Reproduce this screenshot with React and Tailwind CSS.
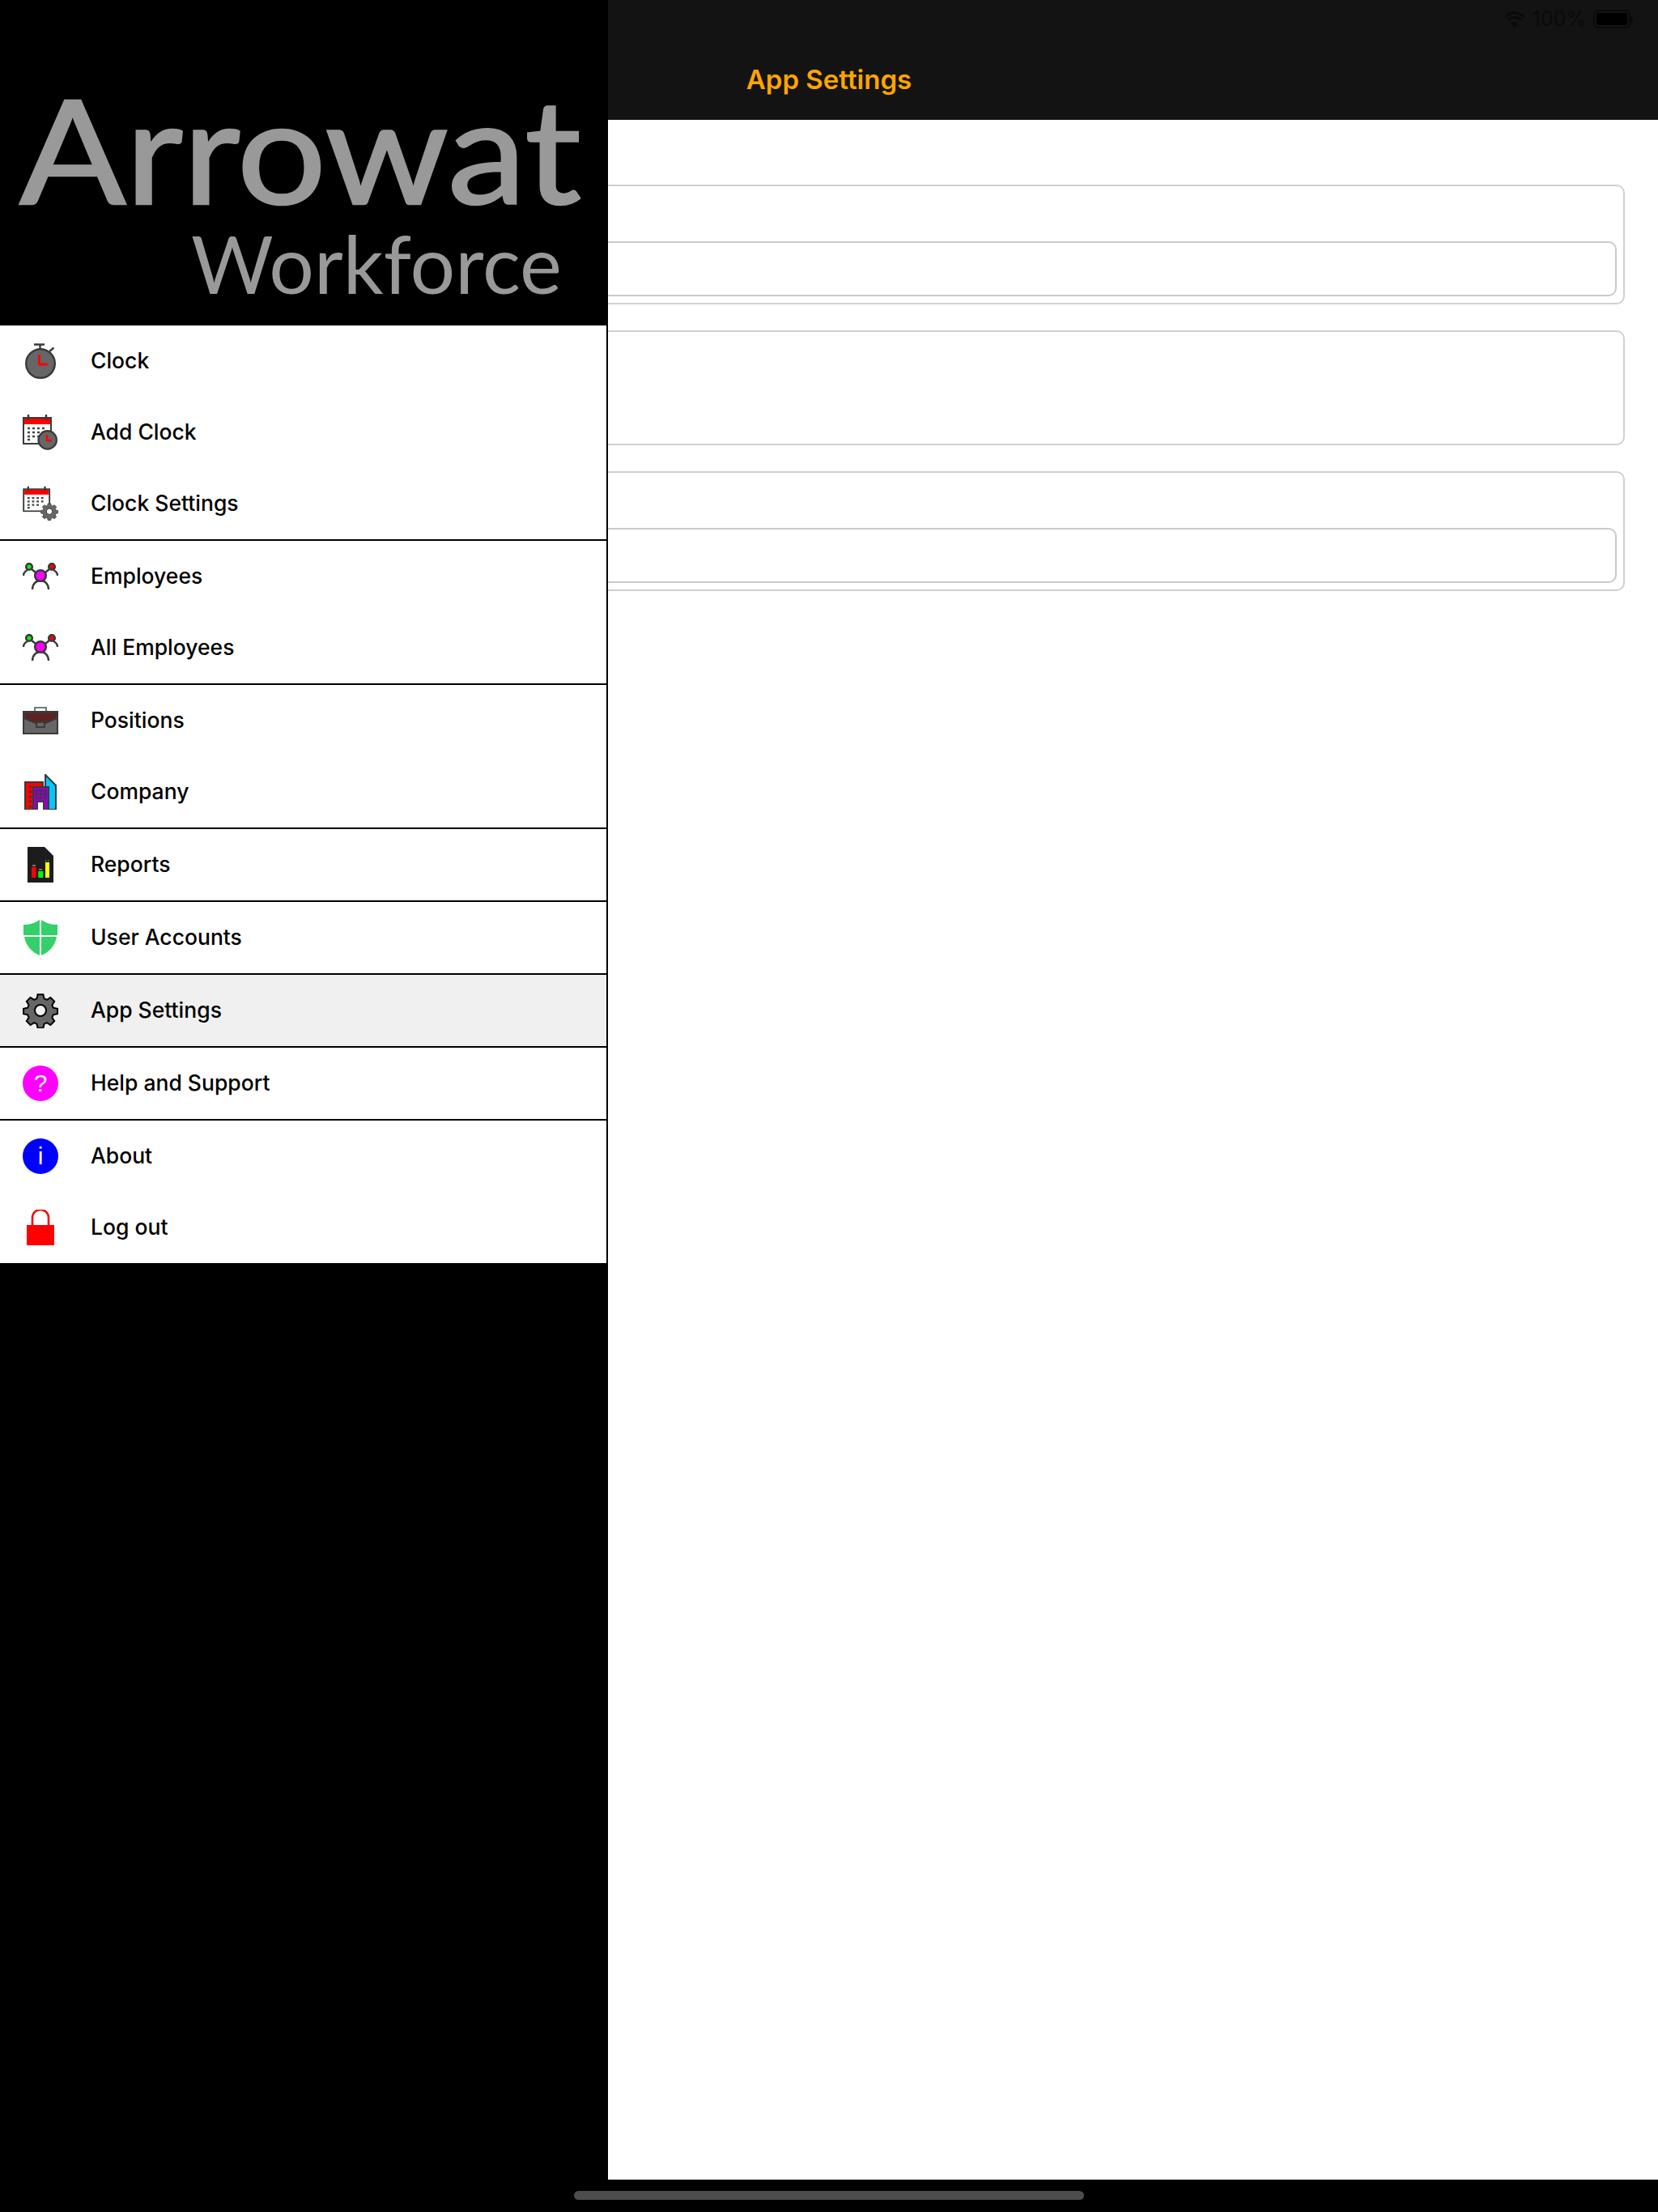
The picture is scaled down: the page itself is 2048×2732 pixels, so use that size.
import { Fragment } from 'react';

const ink = '#3a3a3a';

const ClockIcon = () => (
  <svg width="44" height="44" viewBox="0 0 44 44">
    <path d="M14 1.500h13M21.500 2v5M33 10l5.500-4.500" stroke={ink} strokeWidth="2.400" fill="none" />
    <circle cx="22" cy="25" r="17.800" fill="#666" stroke={ink} strokeWidth="2.400" />
    <path d="M20.500 14v12h10" stroke="#f00" strokeWidth="2.800" fill="none" />
  </svg>
);

const Calendar = () => (
  <g>
    <rect x="2" y="4" width="34" height="32" fill="#fff" stroke={ink} strokeWidth="2" />
    <rect x="3" y="5" width="32" height="7" fill="#f00" />
    <path d="M8 0v7M30 0v7" stroke={ink} strokeWidth="2.400" />
    <path d="M7 17h3M13 17h3M19 17h3M25 17h3M7 22h3M13 22h3M19 22h3M25 22h3M7 27h3M13 27h3M19 27h3M7 31h3" stroke="#444" strokeWidth="2.600" />
  </g>
);

const AddClockIcon = () => (
  <svg width="44" height="44" viewBox="0 0 44 44">
    <g transform="translate(-1 0)">
      <Calendar />
    </g>
    <circle cx="30.700" cy="31.400" r="11.200" fill="#666" stroke={ink} strokeWidth="2.200" />
    <path d="M30 25v7h6" stroke="#f00" strokeWidth="2.400" fill="none" />
  </svg>
);

const gearPath =
  'M18.600 2.200h6.800l1.200 5.200 3.300 1.400 4.500-2.800 4.800 4.800-2.800 4.500 1.400 3.300 5.200 1.200v6.400l-5.200 1.200-1.400 3.300 2.800 4.500-4.800 4.800-4.500-2.800-3.300 1.400-1.200 5.200h-6.800l-1.200-5.200-3.300-1.400-4.500 2.800-4.800-4.800 2.800-4.500-1.400-3.300-5.200-1.200v-6.400l5.200-1.200 1.400-3.300-2.800-4.500 4.800-4.800 4.500 2.800 3.300-1.400z';

const ClockSettingsIcon = () => (
  <svg width="44" height="44" viewBox="0 0 44 44">
    <g transform="translate(-0.700 0.700) scale(0.94 0.85)">
      <Calendar />
    </g>
    <g transform="translate(22 20.700) scale(0.5)">
      <path d={gearPath} fill="#666" stroke="#555" strokeWidth="2" />
      <circle cx="22" cy="22" r="7.500" fill="#fff" stroke="#333" strokeWidth="2" />
    </g>
  </svg>
);

const EmployeesIcon = () => (
  <svg width="44" height="34" viewBox="0 0 44 34">
    <path d="M1 16c0-4 3-6 5-7M43 16c0-4-3-6-5-7M12 33c0-7 5-11 10-11s10 4 10 11" stroke={ink} strokeWidth="2.400" fill="none" />
    <path d="M11 8l5 4M33 8l-5 4" stroke={ink} strokeWidth="2.400" />
    <circle cx="8" cy="5" r="3.800" fill="#0f0" stroke={ink} strokeWidth="2.600" />
    <circle cx="36" cy="5" r="3.800" fill="#f00" stroke={ink} strokeWidth="2.600" />
    <circle cx="22" cy="16" r="6.800" fill="#f0f" stroke={ink} strokeWidth="2.600" />
  </svg>
);

const PositionsIcon = () => (
  <svg width="44" height="34" viewBox="0 0 44 34">
    <path d="M15 6V1h14v5" stroke="#777" strokeWidth="2" fill="none" />
    <rect x="1" y="6" width="42" height="27" fill="#666" stroke={ink} strokeWidth="2" />
    <path d="M2 7h40v7l-20 9-20-9z" fill="#5e2222" stroke={ink} strokeWidth="2" />
    <rect x="17" y="19" width="10" height="6" fill="#666" stroke={ink} strokeWidth="2" />
  </svg>
);

const CompanyIcon = () => (
  <svg width="40" height="44" viewBox="0 0 40 44">
    <path d="M26 1l13 13v30H26z" fill="#00c8ff" stroke={ink} strokeWidth="2" />
    <rect x="1" y="10" width="22" height="34" fill="#f00" stroke={ink} strokeWidth="2" />
    <path d="M6 16h3M6 22h3M6 28h3M6 34h3M6 40h3" stroke={ink} strokeWidth="3" />
    <rect x="11" y="16" width="19" height="28" fill="#9400c8" stroke={ink} strokeWidth="2" />
    <path d="M15 20h11v10H15z M20.500 20v10M15 25h11" fill="none" stroke={ink} strokeWidth="1.600" />
    <path d="M16 44v-10h8v10" fill="#fff" stroke={ink} strokeWidth="2" />
  </svg>
);

const ReportsIcon = () => (
  <svg width="32" height="44" viewBox="0 0 32 44">
    <path d="M0 0h21l11 11v33H0z" fill="#1c1c1c" />
    <rect x="5" y="25" width="5.500" height="13" fill="#f00" />
    <rect x="13.300" y="30" width="6" height="8" fill="#0f0" />
    <rect x="22" y="19" width="5" height="19" fill="#ff0" />
    <path d="M6 23h4M14 28h4M22 17h1M25 17h1" stroke="#ccc" strokeWidth="1" />
  </svg>
);

const ShieldIcon = () => (
  <svg width="42" height="44" viewBox="0 0 42 44">
    <path d="M0 6c8 0 14-2 20-6v19H0z" fill="#34d06a" />
    <path d="M42 6c-8 0-14-2-20-6v19h20z" fill="#34d06a" />
    <path d="M1 21h19v23C10 40 3 32 1 21z" fill="#34d06a" />
    <path d="M41 21H22v23c10-4 17-12 19-23z" fill="#34d06a" />
  </svg>
);

const GearIcon = () => (
  <svg width="44" height="44" viewBox="0 0 44 44">
    <path d={gearPath} fill="#666" stroke="#000" strokeWidth="2" />
    <circle cx="22" cy="22" r="7" fill="#f0f0f0" stroke="#000" strokeWidth="2" />
  </svg>
);

const RoundIcon = ({ className, label }) => (
  <div className={`w-11 h-11 rounded-full flex items-center justify-center text-white text-[30px] leading-none font-['Liberation_Sans',sans-serif] ${className}`}>
    {label}
  </div>
);

const LogoutIcon = () => (
  <svg width="34" height="44" viewBox="0 0 34 44">
    <path d="M7 20V10a10 10 0 0 1 20 0v10" fill="none" stroke="#f00" strokeWidth="2.600" />
    <rect x="0" y="19" width="34" height="25" fill="#f00" />
  </svg>
);

// groups are split by a black rule in the drawer
const menuGroups = [
  [
    { text: 'Clock', icon: <ClockIcon /> },
    { text: 'Add Clock', icon: <AddClockIcon /> },
    { text: 'Clock Settings', icon: <ClockSettingsIcon /> },
  ],
  [
    { text: 'Employees', icon: <EmployeesIcon /> },
    { text: 'All Employees', icon: <EmployeesIcon /> },
  ],
  [
    { text: 'Positions', icon: <PositionsIcon /> },
    { text: 'Company', icon: <CompanyIcon /> },
  ],
  [{ text: 'Reports', icon: <ReportsIcon /> }],
  [{ text: 'User Accounts', icon: <ShieldIcon /> }],
  [{ text: 'App Settings', icon: <GearIcon />, active: true }],
  [{ text: 'Help and Support', icon: <RoundIcon className="bg-[#ff00ff]" label="?" /> }],
  [
    { text: 'About', icon: <RoundIcon className="bg-[#0000ff]" label="i" /> },
    { text: 'Log out', icon: <LogoutIcon /> },
  ],
];

const Logo = () => (
  <svg width="750" height="402" viewBox="0 0 750 402" className="block">
    <text x="24" y="252" fill="#999" stroke="#999" strokeWidth="2.500" fontFamily="Lato, sans-serif" fontSize="178" textLength="694" lengthAdjust="spacingAndGlyphs">
      Arrowat
    </text>
    <text x="236" y="363" fill="#999" fontFamily="Lato, sans-serif" fontSize="98" textLength="458" lengthAdjust="spacingAndGlyphs">
      Workforce
    </text>
  </svg>
);

const Card = ({ withInput }) => (
  <div className={`border-2 border-[#d0d0d0] rounded-[10px] pr-2 pb-2 flex flex-col justify-end ${withInput ? 'h-[148px]' : 'h-[142px]'}`}>
    {withInput && <div className="h-[68px] border-2 border-[#cacaca] rounded-[10px]" />}
  </div>
);

export default function App() {
  return (
    <div className="relative w-[2048px] h-[2732px] bg-black overflow-hidden font-['Inter',sans-serif]">
      {/* Page behind the drawer */}
      <div className="flex flex-col h-full">
        <div className="h-[148px] bg-[#131313]">
          <div className="flex justify-end items-center gap-[9px] h-[47px] pr-[31px] text-[#0a0a0a]">
            <svg width="26" height="20" viewBox="0 0 26 20" fill="#0a0a0a">
              <path d="M13 20l-4.500-5a6.500 6.500 0 0 1 9 0z" />
              <path d="M13 9a10 10 0 0 1 7 3l2-2.300a13 13 0 0 0-18 0l2 2.300a10 10 0 0 1 7-3z" />
              <path d="M13 3.500a15.500 15.500 0 0 1 11 4.500l2-2.300a18.500 18.500 0 0 0-26 0l2 2.300a15.500 15.500 0 0 1 11-4.500z" />
            </svg>
            <span className="text-[25px] leading-none">100%</span>
            <div className="flex items-center">
              <div className="w-[46px] h-[23px] border-2 border-[#0a0a0a] rounded-[6px] p-[2px]">
                <div className="h-full bg-black rounded-[3px]" />
              </div>
              <div className="w-[3px] h-[8px] bg-[#0a0a0a] rounded-r-sm" />
            </div>
          </div>
          <div className="text-center text-[33px] leading-none font-semibold text-[#ffa500] mt-[35px]">App Settings</div>
        </div>

        <div className="flex-1 bg-white px-[41px] pt-[80px] flex flex-col gap-8">
          <Card withInput />
          <Card />
          <Card withInput />
        </div>

        {/* home indicator sits above the drawer */}
        <div className="relative z-10 h-[40px] flex justify-center pt-[14px]">
          <div className="w-[630px] h-[11px] bg-[#4d4d4d] rounded-full" />
        </div>
      </div>

      {/* Drawer */}
      <div className="absolute left-0 top-0 bottom-0 w-[751px] bg-black">
        <Logo />
        <div className="bg-white border-r-2 border-black">
          {menuGroups.map((group, i) => (
            <Fragment key={i}>
              {group.map((item) => (
                <div
                  key={item.text}
                  className={`h-[88px] flex items-center ${item.active ? 'bg-[#f0f0f0]' : ''}`}
                >
                  <div className="w-[100px] flex justify-center shrink-0">{item.icon}</div>
                  <span className="ml-3 text-[26.5px] font-medium text-black">{item.text}</span>
                </div>
              ))}
              {i < menuGroups.length - 1 && <div className="h-[2px] bg-black" />}
            </Fragment>
          ))}
        </div>
      </div>
    </div>
  );
}
